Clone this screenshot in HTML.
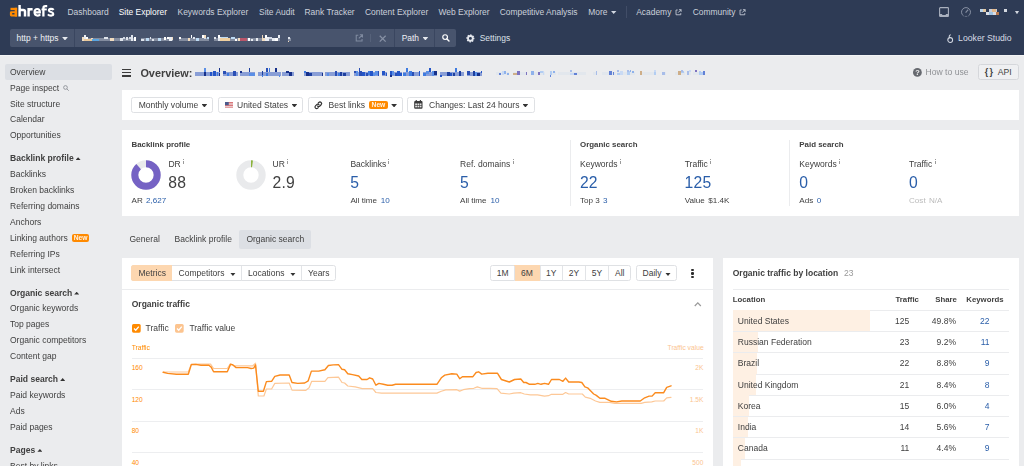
<!DOCTYPE html>
<html><head><meta charset="utf-8">
<style>
*{box-sizing:border-box;margin:0;padding:0}
html,body{width:1024px;height:466px;overflow:hidden;background:#ebecee;font-family:"Liberation Sans",sans-serif;font-size:8.5px;color:#404040}
.t{position:absolute;white-space:nowrap;height:12px;line-height:12px;font-size:8.52px}
.b{font-weight:bold}
.nav{color:#cbd0da;font-size:8.45px}
.w{color:#fff;font-size:8.45px}
.blue{color:#2a5ea9}
.g{color:#888}
.box{position:absolute}
.btn{position:absolute;border:1px solid #dfe1e4;border-radius:2.5px;background:#fff}
.car{position:absolute;width:5.8px;height:3.4px;margin-left:-.5px;margin-top:-.1px;background:#333;clip-path:polygon(0 0,100% 0,50% 100%)}
.cau{position:absolute;width:5px;height:2.9px;background:#333;clip-path:polygon(0 100%,100% 100%,50% 0)}
.num{position:absolute;white-space:nowrap;font-size:15.7px;letter-spacing:.25px;height:18px;line-height:18px}
.sup{position:absolute;font-size:6.6px;color:#858585;height:7px;line-height:7px}
svg{position:absolute;overflow:visible}
#clip{position:relative;width:1024px;height:466px;overflow:hidden;background:#ebecee}
#root{position:absolute;left:0;top:0;width:1024px;height:466px;filter:blur(.35px)}
</style></head><body><div id="clip"><div id="root">

<div class="box" style="left:-10px;top:-10px;width:1044px;height:64.6px;background:#2e3b55"></div>
<div class="box" style="left:-10px;top:54.6px;width:1044px;height:1.4px;background:#f3f4f5"></div>
<svg style="left:0;top:0" width="60" height="22" viewBox="0 0 60 22" fill="none" stroke="#fff" stroke-width="2.45"><g fill="#ff8a00" stroke="none"><rect x="10.5" y="7.8" width="6.6" height="2.3"/><rect x="14.7" y="7.8" width="2.4" height="8.7"/><path fill-rule="evenodd" d="M11.3 11.2H17.1V16.5H11.3Q9.9 16.5 9.9 15.1V12.6Q9.9 11.2 11.3 11.2ZM12.2 13.1V14.6H14.7V13.1Z"/></g><path d="M19.6 5V16.4M19.6 11.8V11.4Q19.6 9.9 21.1 9.9H23.300Q25 9.9 25 11.6V16.4"/><path stroke-width="2.4" d="M28.6 7.9V16.4M28.6 12V11.4Q28.6 9.2 30.8 9.2H32.6"/><path stroke-width="2.1" d="M34.6 12.4H39.9C40 8.1 34.5 7.9 34.5 12.2C34.5 16.2 38.9 16.2 40.2 14.4"/><path stroke-width="2.300" d="M43.4 16.4V8.2Q43.4 6.100 45.4 6.100H47.2"/><path stroke-width="1.900" d="M41.5 9.45H46.8"/><path stroke-width="2.100" d="M53.700 9.900C52.400 8.500 48.900 8.400 48.900 10.400C48.900 12.500 53.300 11.700 53.300 14.100C53.300 16.100 49.300 16 47.900 14.400"/></svg>
<div class="t nav" style="left:67.5px;top:5.70px;">Dashboard</div>
<div class="t w" style="left:118.7px;top:5.70px;">Site Explorer</div>
<div class="t nav" style="left:177.5px;top:5.70px;">Keywords Explorer</div>
<div class="t nav" style="left:259px;top:5.70px;">Site Audit</div>
<div class="t nav" style="left:304.5px;top:5.70px;">Rank Tracker</div>
<div class="t nav" style="left:365px;top:5.70px;">Content Explorer</div>
<div class="t nav" style="left:438.5px;top:5.70px;">Web Explorer</div>
<div class="t nav" style="left:499.7px;top:5.70px;">Competitive Analysis</div>
<div class="t nav" style="left:588.2px;top:5.70px;">More</div>
<div class="t nav" style="left:636.2px;top:5.70px;">Academy</div>
<div class="t nav" style="left:692.7px;top:5.70px;">Community</div>
<div class="car" style="left:611.3px;top:10.8px;background:#d3d8e2"></div>
<div class="box" style="left:626.3px;top:6px;width:1px;height:11.5px;background:#414d67"></div>
<svg style="left:675.4px;top:8.8px" width="6.8" height="6.8" viewBox="0 0 10 10" fill="none" stroke="#c3c9d4" stroke-width="1.3"><path d="M4 1.5H1.5V8.5H8.5V6"/><path d="M5.8 1H9V4.2M9 1L4.6 5.4"/></svg>
<svg style="left:739.4px;top:8.8px" width="6.8" height="6.8" viewBox="0 0 10 10" fill="none" stroke="#c3c9d4" stroke-width="1.3"><path d="M4 1.5H1.5V8.5H8.5V6"/><path d="M5.8 1H9V4.2M9 1L4.6 5.4"/></svg>
<svg style="left:939.4px;top:7px" width="10" height="10" viewBox="0 0 10 10" fill="none" stroke="#a9b0be" stroke-width="1.1"><rect x="0.6" y="0.6" width="8.8" height="8.8" rx="0.7"/><path d="M0.6 6.9H2.9L3.5 7.9H6.5L7.1 6.9H9.4V9.4H0.6Z" fill="#a9b0be" stroke="none"/></svg>
<svg style="left:960.6px;top:7px" width="10" height="10" viewBox="0 0 10 10" fill="none" stroke="#8790a3" stroke-width="1"><path d="M2.6 8.9A4.5 4.5 0 1 1 7.4 8.9" /><path d="M4.6 5.6L7.2 2.6" stroke-width="1.1"/><path d="M3.8 9.400H6.200" stroke-dasharray="0.800 0.800"/></svg>
<div style="position:absolute;left:0;top:0;filter:blur(.45px)"><i class="box" style="left:980px;top:9.2px;width:6px;height:2.6px;background:#b9d3ea"></i><i class="box" style="left:983px;top:9.2px;width:3px;height:2.6px;background:#e5c9a2"></i><i class="box" style="left:988.5px;top:9.2px;width:8.5px;height:2.6px;background:#c9cdd6"></i><i class="box" style="left:991.5px;top:9.2px;width:4px;height:2.6px;background:#e3b88a"></i><i class="box" style="left:985.5px;top:11.8px;width:13px;height:2.8px;background:#d9dde5"></i><i class="box" style="left:988.5px;top:11.8px;width:4px;height:2.8px;background:#9fc4e6"></i><i class="box" style="left:996.3px;top:11.8px;width:2.6px;height:2.8px;background:#b9794f"></i><i class="box" style="left:1004.2px;top:9.2px;width:3px;height:2.9px;background:#d5d9e0"></i></div>
<div class="car" style="left:1014.9px;top:11px;background:#d0d5de;width:4.2px;height:3.2px;margin:0"></div>
<div class="box" style="left:10px;top:29px;width:446px;height:18px;background:#48546d;border-radius:2px"></div>
<div class="box" style="left:74px;top:29px;width:1px;height:18px;background:#3a4660"></div>
<div class="box" style="left:394px;top:29px;width:1px;height:18px;background:#3a4660"></div>
<div class="box" style="left:433.5px;top:29px;width:1px;height:18px;background:#3a4660"></div>
<div class="t w" style="left:16.5px;top:31.80px;color:#eef0f4">http + https</div>
<div class="car" style="left:62.6px;top:37.2px;background:#e6e9ee"></div>
<div style="position:absolute;left:0;top:0;filter:blur(0.6px);opacity:1"><i style="position:absolute;left:81.5px;top:37.5px;width:54.5px;height:3.5px;background:rgba(220,226,236,.4)"></i><i style="position:absolute;left:81.5px;top:36.6px;width:2.4px;height:4.4px;background:#f1dcc0"></i><i style="position:absolute;left:84.1px;top:36.6px;width:1.9px;height:4.4px;background:#e9edf3"></i><i style="position:absolute;left:84.1px;top:34.6px;width:1.8px;height:3.0px;background:#e9edf3"></i><i style="position:absolute;left:86.2px;top:36.6px;width:1.9px;height:4.4px;background:#ffffff"></i><i style="position:absolute;left:90.6px;top:38.4px;width:2.0px;height:2.6px;background:#f1dcc0"></i><i style="position:absolute;left:95.0px;top:38.8px;width:2.7px;height:2.2px;background:#cfd6e2"></i><i style="position:absolute;left:104.2px;top:36.6px;width:3.6px;height:2.6px;background:#dfe4ec"></i><i style="position:absolute;left:110.2px;top:37.5px;width:3.4px;height:3.5px;background:#f1dcc0"></i><i style="position:absolute;left:119.9px;top:37.5px;width:3.3px;height:3.5px;background:#dfe4ec"></i><i style="position:absolute;left:123.2px;top:36.6px;width:2.0px;height:2.6px;background:#cfd6e2"></i><i style="position:absolute;left:125.7px;top:36.6px;width:2.7px;height:3.5px;background:#dfe4ec"></i><i style="position:absolute;left:128.8px;top:36.6px;width:2.3px;height:2.2px;background:#cfd6e2"></i><i style="position:absolute;left:131.2px;top:38.4px;width:2.2px;height:2.6px;background:#dfe4ec"></i><i style="position:absolute;left:131.2px;top:34.6px;width:1.8px;height:3.0px;background:#dfe4ec"></i><i style="position:absolute;left:133.7px;top:36.6px;width:2.3px;height:4.4px;background:#ffffff"></i><i style="position:absolute;left:141.0px;top:37.5px;width:31.5px;height:3.5px;background:rgba(220,226,236,.4)"></i><i style="position:absolute;left:141.0px;top:38.8px;width:3.0px;height:2.2px;background:#dfe4ec"></i><i style="position:absolute;left:146.4px;top:38.4px;width:2.9px;height:2.6px;background:#bcd9f2"></i><i style="position:absolute;left:149.6px;top:36.6px;width:1.9px;height:2.6px;background:#dfe4ec"></i><i style="position:absolute;left:151.8px;top:38.8px;width:2.7px;height:2.2px;background:#dfe4ec"></i><i style="position:absolute;left:158.1px;top:37.5px;width:2.7px;height:3.5px;background:#bcd9f2"></i><i style="position:absolute;left:163.9px;top:36.6px;width:2.3px;height:3.5px;background:#ffffff"></i><i style="position:absolute;left:166.6px;top:36.6px;width:2.4px;height:2.6px;background:#ffffff"></i><i style="position:absolute;left:169.1px;top:36.6px;width:2.7px;height:4.4px;background:#e9edf3"></i><i style="position:absolute;left:171.9px;top:36.6px;width:0.6px;height:3.5px;background:#f1dcc0"></i><i style="position:absolute;left:179.0px;top:37.5px;width:30.0px;height:3.5px;background:rgba(220,226,236,.4)"></i><i style="position:absolute;left:179.0px;top:36.6px;width:2.2px;height:2.2px;background:#ffffff"></i><i style="position:absolute;left:187.7px;top:37.5px;width:2.7px;height:3.5px;background:#f1dcc0"></i><i style="position:absolute;left:190.7px;top:34.6px;width:1.8px;height:3.0px;background:#ffffff"></i><i style="position:absolute;left:193.4px;top:36.6px;width:2.0px;height:2.6px;background:#dfe4ec"></i><i style="position:absolute;left:195.7px;top:38.4px;width:3.5px;height:2.6px;background:#bcd9f2"></i><i style="position:absolute;left:202.0px;top:34.6px;width:1.8px;height:3.0px;background:#ffffff"></i><i style="position:absolute;left:204.3px;top:36.6px;width:2.2px;height:2.2px;background:#cfd6e2"></i><i style="position:absolute;left:204.3px;top:34.6px;width:1.8px;height:3.0px;background:#f1dcc0"></i><i style="position:absolute;left:206.7px;top:36.6px;width:2.3px;height:2.2px;background:#bcd9f2"></i><i style="position:absolute;left:214.0px;top:37.5px;width:66.0px;height:3.5px;background:rgba(220,226,236,.4)"></i><i style="position:absolute;left:214.0px;top:36.6px;width:2.1px;height:2.6px;background:#dfe4ec"></i><i style="position:absolute;left:218.2px;top:36.6px;width:3.0px;height:4.4px;background:#dfe4ec"></i><i style="position:absolute;left:218.2px;top:34.6px;width:1.8px;height:3.0px;background:#ffffff"></i><i style="position:absolute;left:221.4px;top:36.6px;width:3.2px;height:4.4px;background:#bcd9f2"></i><i style="position:absolute;left:224.8px;top:36.6px;width:2.9px;height:2.6px;background:#bcd9f2"></i><i style="position:absolute;left:231.1px;top:36.6px;width:3.5px;height:2.6px;background:#bcd9f2"></i><i style="position:absolute;left:234.6px;top:38.8px;width:2.6px;height:2.2px;background:#ffffff"></i><i style="position:absolute;left:237.6px;top:37.5px;width:3.4px;height:3.5px;background:#f1dcc0"></i><i style="position:absolute;left:247.8px;top:37.5px;width:2.7px;height:3.5px;background:#ffffff"></i><i style="position:absolute;left:250.5px;top:38.8px;width:2.8px;height:2.2px;background:#e9edf3"></i><i style="position:absolute;left:256.0px;top:38.4px;width:2.0px;height:2.6px;background:#e9edf3"></i><i style="position:absolute;left:261.7px;top:37.5px;width:3.5px;height:3.5px;background:#f1dcc0"></i><i style="position:absolute;left:261.7px;top:34.6px;width:1.8px;height:3.0px;background:#f1dcc0"></i><i style="position:absolute;left:265.2px;top:36.6px;width:3.4px;height:4.4px;background:#e9edf3"></i><i style="position:absolute;left:265.2px;top:34.6px;width:1.8px;height:3.0px;background:#ffffff"></i><i style="position:absolute;left:268.7px;top:36.6px;width:3.4px;height:2.2px;background:#cfd6e2"></i><i style="position:absolute;left:272.1px;top:38.4px;width:2.7px;height:2.6px;background:#e9edf3"></i><i style="position:absolute;left:275.3px;top:37.5px;width:2.9px;height:3.5px;background:#ffffff"></i><i style="position:absolute;left:278.4px;top:34.6px;width:1.8px;height:3.0px;background:#e9edf3"></i><i style="position:absolute;left:287.5px;top:37.5px;width:3.0px;height:3.5px;background:rgba(220,226,236,.4)"></i><i style="position:absolute;left:287.5px;top:36.6px;width:2.8px;height:2.6px;background:#dfe4ec"></i><i style="position:absolute;left:287.5px;top:40.5px;width:1.8px;height:1.9px;background:#f1dcc0"></i><i style="position:absolute;left:220px;top:38px;width:10px;height:3px;background:#efcf9f"></i><i style="position:absolute;left:240px;top:37.5px;width:6.5px;height:3.5px;background:#b8566a"></i><i style="position:absolute;left:84px;top:38.6px;width:9px;height:2.4px;background:#e8c79a"></i><i style="position:absolute;left:92px;top:38.6px;width:7px;height:2.4px;background:#5aa5e0"></i></div>
<svg style="left:354.9px;top:34.1px" width="8.3" height="8.3" viewBox="0 0 10 10" fill="none" stroke="#7f8aa0" stroke-width="1.3"><path d="M4 1.5H1.5V8.5H8.5V6"/><path d="M5.8 1H9V4.2M9 1L4.6 5.4"/></svg>
<div class="box" style="left:370.3px;top:34px;width:1px;height:8px;background:#56627a"></div>
<svg style="left:378.6px;top:34.7px" width="7.4" height="7.4" viewBox="0 0 10 10" stroke="#8791a5" stroke-width="1.7"><path d="M1 1L9 9M9 1L1 9"/></svg>
<div class="t w" style="left:401.7px;top:31.80px;color:#eef0f4">Path</div>
<div class="car" style="left:423px;top:37.2px;background:#e6e9ee"></div>
<svg style="left:441.8px;top:34.3px" width="7.6" height="7.6" viewBox="0 0 10 10" fill="none" stroke="#fff" stroke-width="1.5"><circle cx="4.1" cy="4.1" r="3.1"/><path d="M6.5 6.5L9.2 9.2" stroke-width="1.9" stroke-linecap="round"/></svg>
<svg style="left:465.9px;top:33.8px" width="8.8" height="8.8" viewBox="-5 -5 10 10" fill="none" stroke="#e4e7ed"><circle r="2.7" stroke-width="2.1"/><circle r="3.8" stroke-width="1.6" stroke-dasharray="1.6 1.385" transform="rotate(-10)"/></svg>
<div class="t nav" style="left:479.7px;top:31.80px;color:#dde1e8">Settings</div>
<svg style="left:946.9px;top:34px" width="6.5" height="9" viewBox="0 0 6.5 9" fill="none" stroke="#d3d8e2" stroke-width="1.05"><circle cx="3.2" cy="6" r="2.4"/><path d="M2.6 3.700C1.800 2.600 2.300 1 3.800 0.700"/></svg>
<div class="t nav" style="left:958.1px;top:31.80px;color:#d9dde5;font-size:8.68px">Looker Studio</div>
<div class="box" style="left:5px;top:64.3px;width:107px;height:15.7px;background:#dcdfe4;border-radius:2px"></div>
<div class="t " style="left:10px;top:65.90px;">Overview</div>
<div class="t " style="left:10px;top:81.70px;">Page inspect</div>
<div class="t " style="left:10px;top:97.50px;">Site structure</div>
<div class="t " style="left:10px;top:113.20px;">Calendar</div>
<div class="t " style="left:10px;top:128.90px;">Opportunities</div>
<div class="t b" style="left:10px;top:152.30px;font-size:8.55px">Backlink profile</div>
<div class="t " style="left:10px;top:168.10px;">Backlinks</div>
<div class="t " style="left:10px;top:184.00px;">Broken backlinks</div>
<div class="t " style="left:10px;top:200.00px;">Referring domains</div>
<div class="t " style="left:10px;top:215.90px;">Anchors</div>
<div class="t " style="left:10px;top:231.80px;">Linking authors</div>
<div class="t " style="left:10px;top:247.70px;">Referring IPs</div>
<div class="t " style="left:10px;top:263.70px;">Link intersect</div>
<div class="t b" style="left:10px;top:286.80px;font-size:8.55px">Organic search</div>
<div class="t " style="left:10px;top:302.40px;">Organic keywords</div>
<div class="t " style="left:10px;top:318.30px;">Top pages</div>
<div class="t " style="left:10px;top:334.10px;">Organic competitors</div>
<div class="t " style="left:10px;top:350.00px;">Content gap</div>
<div class="t b" style="left:10px;top:373.20px;font-size:8.55px">Paid search</div>
<div class="t " style="left:10px;top:389.10px;">Paid keywords</div>
<div class="t " style="left:10px;top:404.90px;">Ads</div>
<div class="t " style="left:10px;top:420.60px;">Paid pages</div>
<div class="t b" style="left:10px;top:444.00px;font-size:8.55px">Pages</div>
<div class="t " style="left:10px;top:459.90px;">Best by links</div>
<div class="cau" style="left:75.6px;top:157.2px"></div>
<div class="cau" style="left:74.2px;top:291.7px"></div>
<div class="cau" style="left:60.2px;top:378.1px"></div>
<div class="cau" style="left:37.4px;top:448.9px"></div>
<svg style="left:63px;top:85.2px" width="6.2" height="6.2" viewBox="0 0 10 10" fill="none" stroke="#8a8d93" stroke-width="1.4"><circle cx="4" cy="4" r="3"/><path d="M6.300 6.300L9.300 9.300"/></svg>
<div class="box" style="left:71.8px;top:234px;width:17.5px;height:8.3px;background:#ff8a00;border-radius:2px;color:#fff3e4;font-size:6.7px;line-height:8.3px;text-align:center;font-weight:bold">New</div>
<div class="box" style="left:122px;top:68.9px;width:8.6px;height:1.3px;background:#3c3c3c"></div>
<div class="box" style="left:122px;top:72.1px;width:8.6px;height:1.3px;background:#3c3c3c"></div>
<div class="box" style="left:122px;top:75.3px;width:8.6px;height:1.3px;background:#3c3c3c"></div>
<div class="t b" style="left:140.4px;top:66.20px;font-size:10.9px;height:14px;line-height:14px;top:65.7px">Overview:</div>
<div style="position:absolute;left:0;top:0;filter:blur(0.65px);opacity:1"><i style="position:absolute;left:194.5px;top:71.6px;width:25.7px;height:4.0px;background:rgba(40,80,190,.5)"></i><i style="position:absolute;left:204.2px;top:71.6px;width:1.9px;height:4.0px;background:#16308a"></i><i style="position:absolute;left:204.2px;top:68.2px;width:1.8px;height:3.4px;background:#5a8fe6"></i><i style="position:absolute;left:210.0px;top:71.6px;width:2.3px;height:4.0px;background:#2456c8"></i><i style="position:absolute;left:212.8px;top:70.6px;width:3.6px;height:5.0px;background:#2456c8"></i><i style="position:absolute;left:216.5px;top:71.6px;width:1.8px;height:4.0px;background:#3f7be0"></i><i style="position:absolute;left:218.6px;top:72.6px;width:1.7px;height:3.0px;background:#16308a"></i><i style="position:absolute;left:218.6px;top:68.2px;width:1.8px;height:3.4px;background:#16308a"></i><i style="position:absolute;left:223.3px;top:71.6px;width:15.1px;height:4.0px;background:rgba(40,80,190,.5)"></i><i style="position:absolute;left:223.3px;top:70.6px;width:2.9px;height:3.0px;background:#2a4fb5"></i><i style="position:absolute;left:226.7px;top:72.6px;width:2.5px;height:3.0px;background:#3f7be0"></i><i style="position:absolute;left:232.7px;top:70.6px;width:3.1px;height:5.0px;background:#2a4fb5"></i><i style="position:absolute;left:240.0px;top:71.6px;width:15.1px;height:4.0px;background:rgba(40,80,190,.5)"></i><i style="position:absolute;left:240.0px;top:70.6px;width:2.0px;height:2.5px;background:#16308a"></i><i style="position:absolute;left:248.7px;top:73.1px;width:3.0px;height:2.5px;background:#5a8fe6"></i><i style="position:absolute;left:248.7px;top:68.2px;width:1.8px;height:3.4px;background:#1d3f9f"></i><i style="position:absolute;left:251.8px;top:73.1px;width:3.2px;height:2.5px;background:#5a8fe6"></i><i style="position:absolute;left:258.1px;top:71.6px;width:22.7px;height:4.0px;background:rgba(40,80,190,.5)"></i><i style="position:absolute;left:261.5px;top:70.6px;width:1.9px;height:4.0px;background:#1d3f9f"></i><i style="position:absolute;left:261.5px;top:75.1px;width:1.8px;height:2.2px;background:#3f7be0"></i><i style="position:absolute;left:266.1px;top:73.1px;width:2.3px;height:2.5px;background:#3f7be0"></i><i style="position:absolute;left:266.1px;top:68.2px;width:1.8px;height:3.4px;background:#2a4fb5"></i><i style="position:absolute;left:268.5px;top:68.2px;width:1.8px;height:3.4px;background:#3f7be0"></i><i style="position:absolute;left:275.0px;top:68.2px;width:1.8px;height:3.4px;background:#16308a"></i><i style="position:absolute;left:278.5px;top:75.1px;width:1.8px;height:2.2px;background:#5a8fe6"></i><i style="position:absolute;left:282.3px;top:71.6px;width:12.1px;height:4.0px;background:rgba(40,80,190,.5)"></i><i style="position:absolute;left:286.2px;top:70.6px;width:2.7px;height:2.5px;background:#16308a"></i><i style="position:absolute;left:289.2px;top:71.6px;width:2.5px;height:4.0px;background:#16308a"></i><i style="position:absolute;left:303.5px;top:71.6px;width:19.7px;height:4.0px;background:rgba(40,80,190,.5)"></i><i style="position:absolute;left:303.5px;top:70.6px;width:2.3px;height:2.5px;background:#3f7be0"></i><i style="position:absolute;left:306.0px;top:71.6px;width:2.6px;height:4.0px;background:#16308a"></i><i style="position:absolute;left:308.7px;top:73.1px;width:3.5px;height:2.5px;background:#1d3f9f"></i><i style="position:absolute;left:322.3px;top:72.6px;width:0.9px;height:3.0px;background:#16308a"></i><i style="position:absolute;left:324.7px;top:71.6px;width:25.7px;height:4.0px;background:rgba(40,80,190,.5)"></i><i style="position:absolute;left:327.2px;top:73.1px;width:2.2px;height:2.5px;background:#5a8fe6"></i><i style="position:absolute;left:335.1px;top:70.6px;width:2.2px;height:5.0px;background:#2a4fb5"></i><i style="position:absolute;left:337.7px;top:73.1px;width:2.2px;height:2.5px;background:#3f7be0"></i><i style="position:absolute;left:340.1px;top:71.6px;width:2.4px;height:4.0px;background:#1d3f9f"></i><i style="position:absolute;left:342.8px;top:72.6px;width:3.4px;height:3.0px;background:#1d3f9f"></i><i style="position:absolute;left:353.5px;top:71.6px;width:25.7px;height:4.0px;background:rgba(40,80,190,.5)"></i><i style="position:absolute;left:353.5px;top:70.6px;width:2.7px;height:2.5px;background:#2a4fb5"></i><i style="position:absolute;left:356.2px;top:70.6px;width:2.1px;height:5.0px;background:#5a8fe6"></i><i style="position:absolute;left:358.6px;top:70.6px;width:3.2px;height:5.0px;background:#2a4fb5"></i><i style="position:absolute;left:358.6px;top:68.2px;width:1.8px;height:3.4px;background:#2a4fb5"></i><i style="position:absolute;left:362.3px;top:71.6px;width:3.0px;height:4.0px;background:#2456c8"></i><i style="position:absolute;left:365.6px;top:72.6px;width:2.0px;height:3.0px;background:#2a4fb5"></i><i style="position:absolute;left:367.9px;top:70.6px;width:1.8px;height:4.0px;background:#3f7be0"></i><i style="position:absolute;left:370.1px;top:70.6px;width:2.7px;height:5.0px;background:#2456c8"></i><i style="position:absolute;left:373.0px;top:73.1px;width:1.8px;height:2.5px;background:#5a8fe6"></i><i style="position:absolute;left:375.0px;top:70.6px;width:2.5px;height:4.0px;background:#5a8fe6"></i><i style="position:absolute;left:377.7px;top:70.6px;width:1.6px;height:5.0px;background:#2a4fb5"></i><i style="position:absolute;left:382.2px;top:71.6px;width:4.5px;height:4.0px;background:rgba(40,80,190,.5)"></i><i style="position:absolute;left:382.2px;top:70.6px;width:3.3px;height:4.0px;background:#2456c8"></i><i style="position:absolute;left:386.0px;top:73.1px;width:0.8px;height:2.5px;background:#2456c8"></i><i style="position:absolute;left:389.8px;top:71.6px;width:12.1px;height:4.0px;background:rgba(40,80,190,.5)"></i><i style="position:absolute;left:389.8px;top:70.6px;width:2.1px;height:5.0px;background:#2456c8"></i><i style="position:absolute;left:389.8px;top:75.1px;width:1.8px;height:2.2px;background:#16308a"></i><i style="position:absolute;left:392.2px;top:70.6px;width:2.1px;height:4.0px;background:#5a8fe6"></i><i style="position:absolute;left:394.8px;top:73.1px;width:2.4px;height:2.5px;background:#2a4fb5"></i><i style="position:absolute;left:397.4px;top:70.6px;width:2.5px;height:5.0px;background:#2456c8"></i><i style="position:absolute;left:400.1px;top:73.1px;width:1.9px;height:2.5px;background:#2456c8"></i><i style="position:absolute;left:403.4px;top:71.6px;width:16.7px;height:4.0px;background:rgba(40,80,190,.5)"></i><i style="position:absolute;left:403.4px;top:72.6px;width:2.6px;height:3.0px;background:#3f7be0"></i><i style="position:absolute;left:406.1px;top:68.2px;width:1.8px;height:3.4px;background:#3f7be0"></i><i style="position:absolute;left:408.7px;top:70.6px;width:2.9px;height:5.0px;background:#3f7be0"></i><i style="position:absolute;left:411.7px;top:71.6px;width:2.2px;height:4.0px;background:#2a4fb5"></i><i style="position:absolute;left:419.4px;top:70.6px;width:0.7px;height:5.0px;background:#2456c8"></i><i style="position:absolute;left:423.1px;top:71.6px;width:13.6px;height:4.0px;background:rgba(40,80,190,.5)"></i><i style="position:absolute;left:423.1px;top:73.1px;width:2.5px;height:2.5px;background:#3f7be0"></i><i style="position:absolute;left:425.6px;top:70.6px;width:3.5px;height:3.0px;background:#5a8fe6"></i><i style="position:absolute;left:429.3px;top:68.2px;width:1.8px;height:3.4px;background:#2456c8"></i><i style="position:absolute;left:431.9px;top:70.6px;width:2.1px;height:5.0px;background:#5a8fe6"></i><i style="position:absolute;left:434.1px;top:70.6px;width:2.6px;height:4.0px;background:#16308a"></i><i style="position:absolute;left:439.8px;top:71.6px;width:24.2px;height:4.0px;background:rgba(40,80,190,.5)"></i><i style="position:absolute;left:439.8px;top:75.1px;width:1.8px;height:2.2px;background:#2456c8"></i><i style="position:absolute;left:446.9px;top:71.6px;width:3.0px;height:4.0px;background:#1d3f9f"></i><i style="position:absolute;left:450.0px;top:72.6px;width:2.3px;height:3.0px;background:#2456c8"></i><i style="position:absolute;left:452.7px;top:72.6px;width:2.1px;height:3.0px;background:#1d3f9f"></i><i style="position:absolute;left:455.3px;top:68.2px;width:1.8px;height:3.4px;background:#3f7be0"></i><i style="position:absolute;left:458.7px;top:70.6px;width:2.2px;height:5.0px;background:#1d3f9f"></i><i style="position:absolute;left:467.0px;top:71.6px;width:15.1px;height:4.0px;background:rgba(40,80,190,.5)"></i><i style="position:absolute;left:467.0px;top:70.6px;width:2.7px;height:4.0px;background:#2a4fb5"></i><i style="position:absolute;left:472.7px;top:70.6px;width:2.4px;height:5.0px;background:#1d3f9f"></i><i style="position:absolute;left:475.2px;top:71.6px;width:1.8px;height:4.0px;background:#5a8fe6"></i><i style="position:absolute;left:477.1px;top:73.1px;width:3.2px;height:2.5px;background:#16308a"></i><i style="position:absolute;left:480.7px;top:70.6px;width:1.5px;height:2.5px;background:#2456c8"></i></div>
<div style="position:absolute;left:0;top:0;filter:blur(0.6px);opacity:0.85"><i style="position:absolute;left:496.0px;top:72.2px;width:12.5px;height:3.2px;background:rgba(150,190,240,.10)"></i><i style="position:absolute;left:498.6px;top:73.0px;width:2.4px;height:2.4px;background:#4a6fd0"></i><i style="position:absolute;left:501.6px;top:71.4px;width:2.6px;height:4.0px;background:#c3d8f5"></i><i style="position:absolute;left:504.4px;top:71.4px;width:2.1px;height:2.4px;background:#7fa8ea"></i><i style="position:absolute;left:506.5px;top:73.0px;width:2.0px;height:2.4px;background:#7fa8ea"></i><i style="position:absolute;left:513.0px;top:72.2px;width:14.0px;height:3.2px;background:rgba(150,190,240,.10)"></i><i style="position:absolute;left:513.0px;top:73.0px;width:3.5px;height:2.4px;background:#c9a476"></i><i style="position:absolute;left:516.5px;top:71.4px;width:3.4px;height:4.0px;background:#6a5fb8"></i><i style="position:absolute;left:526.1px;top:72.2px;width:0.9px;height:3.2px;background:#6a5fb8"></i><i style="position:absolute;left:531.0px;top:72.2px;width:13.5px;height:3.2px;background:rgba(150,190,240,.10)"></i><i style="position:absolute;left:531.0px;top:71.4px;width:3.4px;height:4.0px;background:#7fa8ea"></i><i style="position:absolute;left:537.6px;top:72.2px;width:2.4px;height:3.2px;background:#6a5fb8"></i><i style="position:absolute;left:539.9px;top:71.4px;width:2.9px;height:2.0px;background:#a9c8f2"></i><i style="position:absolute;left:543.1px;top:71.4px;width:1.4px;height:4.0px;background:#c3d8f5"></i><i style="position:absolute;left:549.5px;top:72.2px;width:6.5px;height:3.2px;background:rgba(150,190,240,.10)"></i><i style="position:absolute;left:549.5px;top:71.4px;width:2.6px;height:4.0px;background:#a9c8f2"></i><i style="position:absolute;left:549.5px;top:74.9px;width:1.8px;height:1.8px;background:#4a6fd0"></i><i style="position:absolute;left:552.5px;top:71.4px;width:2.7px;height:2.0px;background:#7fa8ea"></i><i style="position:absolute;left:558.0px;top:72.2px;width:28.0px;height:3.2px;background:rgba(150,190,240,.10)"></i><i style="position:absolute;left:570.3px;top:73.0px;width:3.5px;height:2.4px;background:#c3d8f5"></i><i style="position:absolute;left:570.3px;top:69.6px;width:1.8px;height:2.8px;background:#9db6e8"></i><i style="position:absolute;left:574.0px;top:73.4px;width:2.9px;height:2.0px;background:#4a6fd0"></i><i style="position:absolute;left:593.0px;top:72.2px;width:3.0px;height:3.2px;background:rgba(150,190,240,.10)"></i><i style="position:absolute;left:595.5px;top:71.4px;width:0.5px;height:4.0px;background:#9db6e8"></i><i style="position:absolute;left:602.0px;top:72.2px;width:14.0px;height:3.2px;background:rgba(150,190,240,.10)"></i><i style="position:absolute;left:609.3px;top:71.4px;width:2.9px;height:4.0px;background:#4a6fd0"></i><i style="position:absolute;left:612.5px;top:72.2px;width:1.8px;height:3.2px;background:#4a6fd0"></i><i style="position:absolute;left:617.0px;top:72.2px;width:17.5px;height:3.2px;background:rgba(150,190,240,.10)"></i><i style="position:absolute;left:617.0px;top:73.0px;width:2.7px;height:2.4px;background:#a9c8f2"></i><i style="position:absolute;left:617.0px;top:69.6px;width:1.8px;height:2.8px;background:#9db6e8"></i><i style="position:absolute;left:620.1px;top:71.4px;width:3.2px;height:4.0px;background:#c3d8f5"></i><i style="position:absolute;left:626.9px;top:71.4px;width:2.7px;height:4.0px;background:#a9c8f2"></i><i style="position:absolute;left:626.9px;top:69.6px;width:1.8px;height:2.8px;background:#9db6e8"></i><i style="position:absolute;left:629.7px;top:69.6px;width:1.8px;height:2.8px;background:#7fa8ea"></i><i style="position:absolute;left:631.9px;top:71.4px;width:2.2px;height:2.0px;background:#7fa8ea"></i><i style="position:absolute;left:639.5px;top:72.2px;width:16.5px;height:3.2px;background:rgba(150,190,240,.10)"></i><i style="position:absolute;left:639.5px;top:71.4px;width:2.3px;height:4.0px;background:#c9a476"></i><i style="position:absolute;left:654.4px;top:71.4px;width:1.6px;height:4.0px;background:#a9c8f2"></i><i style="position:absolute;left:654.4px;top:69.6px;width:1.8px;height:2.8px;background:#c3d8f5"></i><i style="position:absolute;left:662.0px;top:72.2px;width:4.0px;height:3.2px;background:rgba(150,190,240,.10)"></i><i style="position:absolute;left:662.0px;top:72.2px;width:3.3px;height:3.2px;background:#9db6e8"></i><i style="position:absolute;left:674.5px;top:72.2px;width:10.0px;height:3.2px;background:rgba(150,190,240,.10)"></i><i style="position:absolute;left:677.5px;top:71.4px;width:3.3px;height:4.0px;background:#c9a476"></i><i style="position:absolute;left:681.2px;top:71.4px;width:2.8px;height:2.0px;background:#a9c8f2"></i><i style="position:absolute;left:681.2px;top:69.6px;width:1.8px;height:2.8px;background:#9db6e8"></i><i style="position:absolute;left:687.0px;top:72.2px;width:4.0px;height:3.2px;background:rgba(150,190,240,.10)"></i><i style="position:absolute;left:687.0px;top:71.4px;width:1.8px;height:3.2px;background:#9db6e8"></i><i style="position:absolute;left:688.9px;top:69.6px;width:1.8px;height:2.8px;background:#c3d8f5"></i><i style="position:absolute;left:693.0px;top:72.2px;width:11.5px;height:3.2px;background:rgba(150,190,240,.10)"></i><i style="position:absolute;left:695.3px;top:69.6px;width:1.8px;height:2.8px;background:#6a5fb8"></i><i style="position:absolute;left:698.7px;top:71.4px;width:2.2px;height:4.0px;background:#a9c8f2"></i><i style="position:absolute;left:701.0px;top:72.2px;width:2.0px;height:3.2px;background:#a9c8f2"></i><i style="position:absolute;left:703.0px;top:71.4px;width:1.5px;height:3.2px;background:#4a6fd0"></i></div>
<svg style="left:913.4px;top:67.9px" width="8.8" height="8.8" viewBox="0 0 10 10"><circle cx="5" cy="5" r="5" fill="#66696f"/><text x="5" y="8.100" font-size="8.400" font-weight="bold" fill="#f4f4f5" text-anchor="middle" font-family="Liberation Sans">?</text></svg>
<div class="t g" style="left:925.5px;top:66.20px;color:#8f9195;font-size:8.6px">How to use</div>
<div class="btn" style="left:978px;top:64.3px;width:40.7px;height:15.6px;background:#eff0f2;border-color:#d5d7db"></div>
<div class="t b" style="left:984.8px;top:65.90px;font-size:9px;letter-spacing:1.3px">{}</div>
<div class="t " style="left:997.8px;top:66.20px;font-size:8.6px">API</div>
<div class="box" style="left:122px;top:90px;width:896.5px;height:29.5px;background:#fff"></div>
<div class="btn" style="left:131.1px;top:97.2px;width:82.2px;height:15.8px"></div>
<div class="btn" style="left:217.9px;top:97.2px;width:85.2px;height:15.8px"></div>
<div class="btn" style="left:307.8px;top:97.2px;width:94.9px;height:15.8px"></div>
<div class="btn" style="left:407.4px;top:97.2px;width:127.9px;height:15.8px"></div>
<div class="t " style="left:138.7px;top:99.00px;">Monthly volume</div>
<div class="car" style="left:202px;top:104.2px"></div>
<svg style="left:225px;top:102.2px" width="8" height="5.6" viewBox="0 0 16 11"><rect width="16" height="11" fill="#f2f2f2"/><g fill="#d2585d"><rect y="0" width="16" height="1.600"/><rect y="3.100" width="16" height="1.600"/><rect y="6.300" width="16" height="1.600"/><rect y="9.400" width="16" height="1.600"/></g><rect width="7.500" height="6.300" fill="#4a5a8c"/></svg>
<div class="t " style="left:237px;top:99.00px;">United States</div>
<div class="car" style="left:292px;top:104.2px"></div>
<svg style="left:314.3px;top:100.800px" width="8.6" height="8.6" viewBox="0 0 24 24" fill="none" stroke="#333" stroke-width="3.300" stroke-linecap="round"><path d="M10 14a4.500 4.500 0 006.400 0l3.500-3.500a4.500 4.500 0 00-6.400-6.400L12 5.600"/><path d="M14 10a4.500 4.500 0 00-6.400 0L4.100 13.500a4.500 4.500 0 006.400 6.400L12 18.400"/></svg>
<div class="t " style="left:328.5px;top:99.00px;">Best links</div>
<div class="box" style="left:369.3px;top:100.9px;width:18.3px;height:8.5px;background:#ff8a00;border-radius:2px;color:#fff3e4;font-size:6.7px;line-height:8.5px;text-align:center;font-weight:bold">New</div>
<div class="car" style="left:391.7px;top:104.2px"></div>
<svg style="left:414.2px;top:100.4px" width="8.7" height="8.8" viewBox="0 0 10 10"><rect x="1.9" y="0" width="1.400" height="2.500" fill="#3a3a3a"/><rect x="6.700" y="0" width="1.400" height="2.500" fill="#3a3a3a"/><rect x="0.200" y="1.100" width="9.600" height="8.800" rx="1.100" fill="#3a3a3a"/><g fill="#e4e4e4"><rect x="1.400" y="3.900" width="2" height="1.900"/><rect x="4" y="3.900" width="2" height="1.900"/><rect x="6.600" y="3.900" width="2" height="1.900"/><rect x="1.400" y="6.500" width="2" height="1.900"/><rect x="4" y="6.500" width="2" height="1.900"/><rect x="6.600" y="6.500" width="2" height="1.900"/></g></svg>
<div class="t " style="left:429px;top:99.00px;">Changes: Last 24 hours</div>
<div class="car" style="left:523px;top:104.2px"></div>
<div class="box" style="left:122px;top:130px;width:896.5px;height:85.5px;background:#fff"></div>
<div class="box" style="left:569.5px;top:140px;width:1px;height:65.5px;background:#ebecee"></div>
<div class="box" style="left:788.8px;top:140px;width:1px;height:65.5px;background:#ebecee"></div>
<div class="t b" style="left:131.5px;top:138.60px;font-size:7.9px">Backlink profile</div>
<div class="t b" style="left:580px;top:138.60px;font-size:7.9px">Organic search</div>
<div class="t b" style="left:799.3px;top:138.60px;font-size:7.9px">Paid search</div>
<svg style="left:131.3px;top:160px" width="30" height="30" viewBox="-15 -15 30 30"><circle r="11.2" fill="none" stroke="#e9eaec" stroke-width="7"/><circle r="11.2" fill="none" stroke="#7562c4" stroke-width="7" stroke-dasharray="61.93 70.37" transform="rotate(-90)"/></svg>
<svg style="left:235.6px;top:160px" width="30" height="30" viewBox="-15 -15 30 30"><circle r="11.2" fill="none" stroke="#e9eaec" stroke-width="7"/><circle r="11.2" fill="none" stroke="#8bb33a" stroke-width="7" stroke-dasharray="1.55 70.37" transform="rotate(-90)"/></svg>
<div class="t " style="left:168.4px;top:158.20px;">DR</div>
<div class="num " style="left:168.3px;top:173.6px">88</div>
<div class="t " style="left:272.6px;top:158.20px;">UR</div>
<div class="num " style="left:272.5px;top:173.6px">2.9</div>
<div class="t " style="left:350.4px;top:158.20px;">Backlinks</div>
<div class="num blue" style="left:350.29999999999995px;top:173.6px">5</div>
<div class="t " style="left:460px;top:158.20px;">Ref. domains</div>
<div class="num blue" style="left:459.9px;top:173.6px">5</div>
<div class="t " style="left:580px;top:158.20px;">Keywords</div>
<div class="num blue" style="left:579.9px;top:173.6px">22</div>
<div class="t " style="left:684.7px;top:158.20px;">Traffic</div>
<div class="num blue" style="left:684.6px;top:173.6px">125</div>
<div class="t " style="left:799.3px;top:158.20px;">Keywords</div>
<div class="num blue" style="left:799.1999999999999px;top:173.6px">0</div>
<div class="t " style="left:909px;top:158.20px;">Traffic</div>
<div class="num blue" style="left:908.9px;top:173.6px">0</div>
<div class="box" style="left:183.2px;top:159.4px;width:1.05px;height:1.05px;background:#9a9a9a"></div><div class="box" style="left:183.2px;top:161px;width:1.05px;height:3.1px;background:#9a9a9a"></div>
<div class="box" style="left:287.2px;top:159.4px;width:1.05px;height:1.05px;background:#9a9a9a"></div><div class="box" style="left:287.2px;top:161px;width:1.05px;height:3.1px;background:#9a9a9a"></div>
<div class="box" style="left:387.9px;top:159.4px;width:1.05px;height:1.05px;background:#9a9a9a"></div><div class="box" style="left:387.9px;top:161px;width:1.05px;height:3.1px;background:#9a9a9a"></div>
<div class="box" style="left:513.1px;top:159.4px;width:1.05px;height:1.05px;background:#9a9a9a"></div><div class="box" style="left:513.1px;top:161px;width:1.05px;height:3.1px;background:#9a9a9a"></div>
<div class="box" style="left:619.9px;top:159.4px;width:1.05px;height:1.05px;background:#9a9a9a"></div><div class="box" style="left:619.9px;top:161px;width:1.05px;height:3.1px;background:#9a9a9a"></div>
<div class="box" style="left:709.9px;top:159.4px;width:1.05px;height:1.05px;background:#9a9a9a"></div><div class="box" style="left:709.9px;top:161px;width:1.05px;height:3.1px;background:#9a9a9a"></div>
<div class="box" style="left:839.2px;top:159.4px;width:1.05px;height:1.05px;background:#9a9a9a"></div><div class="box" style="left:839.2px;top:161px;width:1.05px;height:3.1px;background:#9a9a9a"></div>
<div class="box" style="left:934.7px;top:159.4px;width:1.05px;height:1.05px;background:#9a9a9a"></div><div class="box" style="left:934.7px;top:161px;width:1.05px;height:3.1px;background:#9a9a9a"></div>
<div class="t " style="left:131.5px;top:195.00px;font-size:8.1px">AR</div>
<div class="t blue" style="left:146.1px;top:195.00px;font-size:8.1px">2,627</div>
<div class="t " style="left:350.4px;top:195.00px;font-size:8.1px">All time</div>
<div class="t blue" style="left:380.79999999999995px;top:195.00px;font-size:8.1px">10</div>
<div class="t " style="left:460px;top:195.00px;font-size:8.1px">All time</div>
<div class="t blue" style="left:490.4px;top:195.00px;font-size:8.1px">10</div>
<div class="t " style="left:580px;top:195.00px;font-size:8.1px">Top 3</div>
<div class="t blue" style="left:603px;top:195.00px;font-size:8.1px">3</div>
<div class="t " style="left:684.7px;top:195.00px;font-size:8.1px">Value</div>
<div class="t " style="left:708.2px;top:195.00px;font-size:8.1px">$1.4K</div>
<div class="t " style="left:799.3px;top:195.00px;font-size:8.1px">Ads</div>
<div class="t blue" style="left:816.8px;top:195.00px;font-size:8.1px">0</div>
<div class="t " style="left:909px;top:195.00px;font-size:8.1px;color:#bbb">Cost</div>
<div class="t " style="left:928.9px;top:195.00px;font-size:8.1px;color:#bbb">N/A</div>
<div class="box" style="left:238.8px;top:230.2px;width:72.5px;height:18.7px;background:#dcdfe4;border-radius:2px"></div>
<div class="t " style="left:129.5px;top:233.30px;">General</div>
<div class="t " style="left:174.6px;top:233.30px;">Backlink profile</div>
<div class="t " style="left:246.4px;top:233.30px;">Organic search</div>
<div class="box" style="left:122px;top:257.8px;width:591px;height:230px;background:#fff"></div>
<div class="box" style="left:122px;top:289px;width:591px;height:1px;background:#ebecee"></div>
<div class="btn" style="left:131.3px;top:265.2px;width:205px;height:16.2px"></div>
<div class="box" style="left:131.3px;top:265.2px;width:40.9px;height:16.2px;background:#fdd7b0;border-radius:2.5px 0 0 2.5px"></div>
<div class="box" style="left:241.2px;top:266px;width:1px;height:14.6px;background:#e2e4e7"></div>
<div class="box" style="left:301.3px;top:266px;width:1px;height:14.6px;background:#e2e4e7"></div>
<div class="t " style="left:138.5px;top:267.40px;">Metrics</div>
<div class="t " style="left:178.5px;top:267.40px;">Competitors</div>
<div class="car" style="left:230.5px;top:272.6px"></div>
<div class="t " style="left:248px;top:267.40px;">Locations</div>
<div class="car" style="left:290.5px;top:272.6px"></div>
<div class="t " style="left:308px;top:267.40px;">Years</div>
<div class="btn" style="left:489.9px;top:265.2px;width:140.8px;height:16.2px"></div>
<div class="box" style="left:514.2px;top:265.2px;width:25.6px;height:16.2px;background:#fdd7b0"></div>
<div class="box" style="left:514.2px;top:266px;width:1px;height:14.6px;background:#e2e4e7"></div>
<div class="box" style="left:539.7px;top:266px;width:1px;height:14.6px;background:#e2e4e7"></div>
<div class="box" style="left:561.9px;top:266px;width:1px;height:14.6px;background:#e2e4e7"></div>
<div class="box" style="left:585.1px;top:266px;width:1px;height:14.6px;background:#e2e4e7"></div>
<div class="box" style="left:608.1px;top:266px;width:1px;height:14.6px;background:#e2e4e7"></div>
<div class="t " style="left:496.8px;top:267.40px;">1M</div>
<div class="t " style="left:521px;top:267.40px;">6M</div>
<div class="t " style="left:546px;top:267.40px;">1Y</div>
<div class="t " style="left:568.8px;top:267.40px;">2Y</div>
<div class="t " style="left:591.8px;top:267.40px;">5Y</div>
<div class="t " style="left:615px;top:267.40px;">All</div>
<div class="btn" style="left:635.9px;top:265.2px;width:41.2px;height:16.2px"></div>
<div class="t " style="left:642.5px;top:267.40px;">Daily</div>
<div class="car" style="left:665.6px;top:272.6px"></div>
<div class="box" style="left:691.5px;top:269.4px;width:2.2px;height:2.2px;margin:-.15px;background:#2c2c2c;border-radius:50%"></div>
<div class="box" style="left:691.5px;top:272.6px;width:2.2px;height:2.2px;margin:-.15px;background:#2c2c2c;border-radius:50%"></div>
<div class="box" style="left:691.5px;top:275.8px;width:2.2px;height:2.2px;margin:-.15px;background:#2c2c2c;border-radius:50%"></div>
<div class="t b" style="left:131.7px;top:298.10px;">Organic traffic</div>
<svg style="left:694.2px;top:301.7px" width="7.6" height="4.600" viewBox="0 0 10 6" fill="none" stroke="#9a9a9a" stroke-width="1.600"><path d="M1 5.300L5 1.200L9 5.300"/></svg>
<svg style="left:131.6px;top:323.9px" width="8.700" height="8.700" viewBox="0 0 10 10"><rect width="10" height="10" rx="1.800" fill="#ff8a00"/><path d="M2.300 5.200L4.300 7.200L7.800 3" fill="none" stroke="#fff" stroke-width="1.500"/></svg>
<svg style="left:175.4px;top:323.9px" width="8.700" height="8.700" viewBox="0 0 10 10"><rect width="10" height="10" rx="1.800" fill="#fcc48f"/><path d="M2.300 5.200L4.300 7.200L7.800 3" fill="none" stroke="#fff" stroke-width="1.500"/></svg>
<div class="t " style="left:145.5px;top:322.30px;">Traffic</div>
<div class="t " style="left:189.4px;top:322.30px;">Traffic value</div>
<div class="t " style="left:131.7px;top:341.50px;font-size:6.7px;color:#ff8a00">Traffic</div>
<div class="t" style="right:320.4px;top:341.6px;font-size:6.7px;color:#fbc48f">Traffic value</div>
<div class="box" style="left:131.7px;top:357.6px;width:571.6px;height:1px;background:#edeef0"></div>
<div class="t " style="left:131.7px;top:362.30px;font-size:6.6px;color:#ff8a00">160</div>
<div class="t" style="right:320.70000000000005px;top:362.3px;font-size:6.6px;color:#fbc48f">2K</div>
<div class="box" style="left:131.7px;top:389.2px;width:571.6px;height:1px;background:#edeef0"></div>
<div class="t " style="left:131.7px;top:393.90px;font-size:6.6px;color:#ff8a00">120</div>
<div class="t" style="right:320.70000000000005px;top:393.9px;font-size:6.6px;color:#fbc48f">1.5K</div>
<div class="box" style="left:131.7px;top:420.7px;width:571.6px;height:1px;background:#edeef0"></div>
<div class="t " style="left:131.7px;top:425.40px;font-size:6.6px;color:#ff8a00">80</div>
<div class="t" style="right:320.70000000000005px;top:425.4px;font-size:6.6px;color:#fbc48f">1K</div>
<div class="box" style="left:131.7px;top:452.2px;width:571.6px;height:1px;background:#edeef0"></div>
<div class="t " style="left:131.7px;top:456.90px;font-size:6.6px;color:#ff8a00">40</div>
<div class="t" style="right:320.70000000000005px;top:456.9px;font-size:6.6px;color:#fbc48f">500</div>
<svg style="left:0;top:0" width="1024" height="466" viewBox="0 0 1024 466" fill="none" stroke-linejoin="round" stroke-linecap="round"><path d="M163.2 372.0 L188.3 372.0 L191.3 364.1 L210.6 364.1 L213.6 368.5 L227.3 368.5 L230.5 363.7 L234.4 365.8 L252.8 365.8 L255.5 363.2 L258.3 396.0 L263.9 396.0 L266.4 389.0 L271.6 389.0 L274.8 383.4 L289.2 383.0 L292.0 390.1 L305.6 390.4 L309.1 387.8 L311.7 381.3 L324.9 381.3 L327.9 377.6 L338.5 377.2 L342.0 382.5 L344.6 383.0 L347.8 386.0 L355.2 386.9 L362.2 388.7 L372.7 388.7 L375.9 392.5 L381.5 393.1 L436.9 393.1 L441.3 391.3 L445.7 389.9 L456.8 389.7 L459.7 391.1 L463.3 389.7 L469.4 388.7 L473.8 388.3 L477.3 386.9 L481.7 388.3 L490.0 388.3 L497.0 388.7 L500.9 393.1 L509.3 394.0 L513.7 393.1 L520.8 392.7 L524.3 394.0 L530.4 394.8 L537.5 394.8 L544.5 396.1 L548.5 395.7 L551.5 394.3 L562.9 394.3 L565.6 392.5 L568.7 394.0 L582.3 394.0 L585.3 397.1 L590.2 398.3 L595.5 401.0 L599.9 402.4 L609.5 402.4 L614.8 403.3 L641.2 403.3 L644.7 402.4 L651.7 401.9 L655.2 401.0 L663.7 401.0 L666.7 397.8 L671.0 397.3" stroke="#fdc897" stroke-width="1.2"/><path d="M163.2 372.3 L167.6 373.4 L176.4 374.3 L188.3 374.3 L191.3 364.6 L195.7 364.4 L201.0 365.3 L208.9 365.3 L211.2 367.1 L213.6 371.8 L227.3 371.8 L230.5 364.4 L232.6 364.8 L236.1 367.6 L247.6 367.6 L251.1 368.5 L253.7 368.1 L255.5 364.9 L258.3 391.3 L263.4 391.3 L266.4 381.6 L271.6 381.3 L274.8 376.4 L280.1 375.0 L289.2 375.0 L292.0 382.5 L297.7 383.4 L304.7 383.0 L308.2 380.8 L311.4 371.1 L318.7 371.1 L324.9 369.7 L328.4 365.5 L333.2 364.9 L338.5 364.6 L342.0 369.3 L344.6 369.7 L347.8 373.7 L352.5 374.6 L358.7 376.0 L361.8 379.5 L367.1 379.5 L369.6 377.8 L372.7 379.0 L375.9 385.2 L378.9 383.4 L383.3 384.3 L387.7 385.2 L392.1 385.2 L395.6 384.3 L436.9 384.3 L441.3 377.8 L444.8 375.1 L451.8 373.7 L456.8 374.1 L459.7 378.7 L462.4 376.7 L472.9 376.7 L476.1 372.5 L478.6 371.8 L481.7 374.1 L487.9 373.2 L497.4 373.2 L501.4 379.5 L509.3 382.0 L514.6 379.5 L520.8 379.0 L523.7 382.5 L526.0 382.5 L529.6 384.3 L534.8 384.3 L537.8 383.4 L541.0 384.3 L544.5 383.4 L548.5 384.3 L551.5 379.5 L559.4 379.5 L562.9 381.3 L565.6 378.1 L568.7 382.0 L578.8 382.0 L581.8 382.5 L584.9 386.9 L587.6 387.8 L593.7 394.0 L596.3 395.4 L599.9 398.3 L605.1 398.3 L611.3 401.3 L616.6 401.9 L621.8 401.0 L640.3 401.0 L644.7 397.8 L649.1 396.1 L652.1 396.1 L655.2 392.7 L663.7 392.7 L666.7 387.3 L671.0 385.8" stroke="#fb8b1e" stroke-width="1.4"/></svg>
<div class="box" style="left:722.8px;top:257.8px;width:296px;height:230px;background:#fff"></div>
<div class="t b" style="left:732.7px;top:267.20px;">Organic traffic by location</div>
<div class="t g" style="left:844px;top:267.20px;color:#999">23</div>
<div class="box" style="left:732.7px;top:289.2px;width:276.3px;height:1px;background:#ebecee"></div>
<div class="t b" style="left:732.7px;top:293.70px;font-size:7.8px">Location</div>
<div class="t b" style="left:895.5px;top:293.70px;font-size:7.8px">Traffic</div>
<div class="t b" style="left:935.2px;top:293.70px;font-size:7.8px">Share</div>
<div class="t b" style="left:966.3px;top:293.70px;font-size:7.8px">Keywords</div>
<div class="box" style="left:732.7px;top:309.80px;width:276.3px;height:1px;background:#ebecee"></div>
<div class="box" style="left:732.7px;top:310.30px;width:137.3px;height:20.75px;background:#fef0e3"></div>
<div class="t " style="left:737.8px;top:314.70px;">United States</div>
<div class="t" style="right:114.70000000000005px;top:314.70px">125</div>
<div class="t" style="right:68px;top:314.70px">49.8%</div>
<div class="t blue" style="right:34.5px;top:314.70px">22</div>
<div class="box" style="left:732.7px;top:331.07px;width:276.3px;height:1px;background:#ebecee"></div>
<div class="box" style="left:732.7px;top:331.57px;width:25.4px;height:20.75px;background:#fef0e3"></div>
<div class="t " style="left:737.8px;top:335.97px;">Russian Federation</div>
<div class="t" style="right:114.70000000000005px;top:335.97px">23</div>
<div class="t" style="right:68px;top:335.97px">9.2%</div>
<div class="t blue" style="right:34.5px;top:335.97px">11</div>
<div class="box" style="left:732.7px;top:352.34px;width:276.3px;height:1px;background:#ebecee"></div>
<div class="box" style="left:732.7px;top:352.84px;width:24.3px;height:20.75px;background:#fef0e3"></div>
<div class="t " style="left:737.8px;top:357.24px;">Brazil</div>
<div class="t" style="right:114.70000000000005px;top:357.24px">22</div>
<div class="t" style="right:68px;top:357.24px">8.8%</div>
<div class="t blue" style="right:34.5px;top:357.24px">9</div>
<div class="box" style="left:732.7px;top:373.61px;width:276.3px;height:1px;background:#ebecee"></div>
<div class="box" style="left:732.7px;top:374.11px;width:23.2px;height:20.75px;background:#fef0e3"></div>
<div class="t " style="left:737.8px;top:378.51px;">United Kingdom</div>
<div class="t" style="right:114.70000000000005px;top:378.51px">21</div>
<div class="t" style="right:68px;top:378.51px">8.4%</div>
<div class="t blue" style="right:34.5px;top:378.51px">8</div>
<div class="box" style="left:732.7px;top:394.88px;width:276.3px;height:1px;background:#ebecee"></div>
<div class="box" style="left:732.7px;top:395.38px;width:16.5px;height:20.75px;background:#fef0e3"></div>
<div class="t " style="left:737.8px;top:399.78px;">Korea</div>
<div class="t" style="right:114.70000000000005px;top:399.78px">15</div>
<div class="t" style="right:68px;top:399.78px">6.0%</div>
<div class="t blue" style="right:34.5px;top:399.78px">4</div>
<div class="box" style="left:732.7px;top:416.15px;width:276.3px;height:1px;background:#ebecee"></div>
<div class="box" style="left:732.7px;top:416.65px;width:15.4px;height:20.75px;background:#fef0e3"></div>
<div class="t " style="left:737.8px;top:421.05px;">India</div>
<div class="t" style="right:114.70000000000005px;top:421.05px">14</div>
<div class="t" style="right:68px;top:421.05px">5.6%</div>
<div class="t blue" style="right:34.5px;top:421.05px">7</div>
<div class="box" style="left:732.7px;top:437.42px;width:276.3px;height:1px;background:#ebecee"></div>
<div class="box" style="left:732.7px;top:437.92px;width:12.1px;height:20.75px;background:#fef0e3"></div>
<div class="t " style="left:737.8px;top:442.32px;">Canada</div>
<div class="t" style="right:114.70000000000005px;top:442.32px">11</div>
<div class="t" style="right:68px;top:442.32px">4.4%</div>
<div class="t blue" style="right:34.5px;top:442.32px">9</div>
<div class="box" style="left:732.7px;top:458.69px;width:276.3px;height:1px;background:#ebecee"></div>
<div class="box" style="left:732.7px;top:459.19px;width:8.8px;height:20.75px;background:#fef0e3"></div>
<div class="t " style="left:737.8px;top:463.59px;">Germany</div>
<div class="t" style="right:114.70000000000005px;top:463.59px">8</div>
<div class="t" style="right:68px;top:463.59px">3.2%</div>
<div class="t blue" style="right:34.5px;top:463.59px">5</div>
</div></div></body></html>
